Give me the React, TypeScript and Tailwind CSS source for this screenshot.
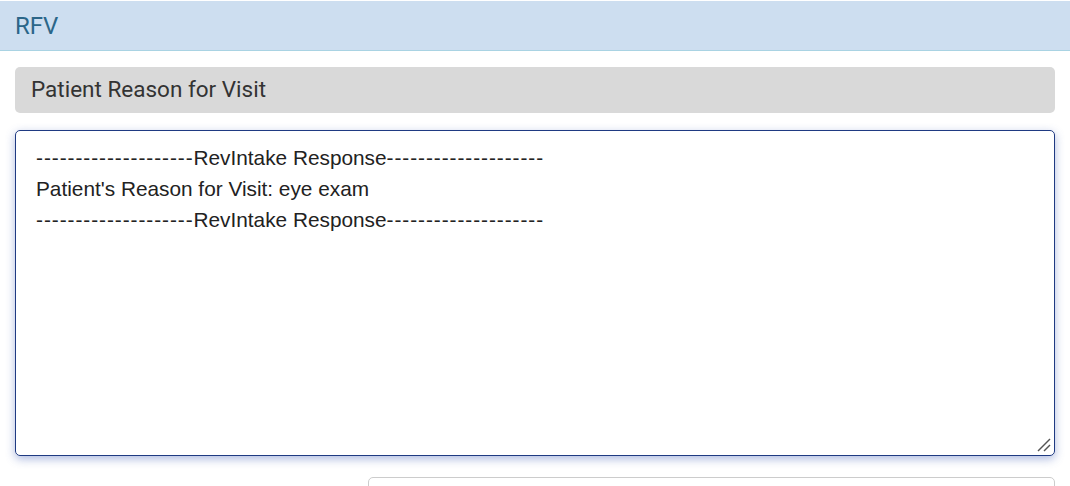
const dashes = '--------------------';

function Dashes() {
  return <span className="tracking-[0.95px]">{dashes}</span>;
}

export default function App() {
  return (
    <div className="w-[1070px] h-[486px] overflow-hidden bg-white">
      <div className="mt-px h-[50px] bg-[#cddef0] border-b border-[#a9d3e3] flex items-center px-[15px]">
        <span className="text-[24px] text-[#2b6689] font-['Roboto',sans-serif]">RFV</span>
      </div>

      <div className="px-[15px]">
        <div className="mt-4 h-[46px] rounded-[5px] bg-[#d9d9d9] flex items-center px-4">
          <span className="text-[22.5px] text-[#333] font-['Roboto',sans-serif]">Patient Reason for Visit</span>
        </div>

        <div className="relative mt-[17px] h-[326px] rounded-[5px] border border-[#1f3a82] px-5 pt-[11px] text-[20.8px] leading-[31px] text-[#222] font-['Liberation_Sans',Arial,sans-serif] shadow-[0_3px_10px_rgba(60,90,180,0.42)]">
          <div><Dashes />RevIntake Response<Dashes /></div>
          <div>Patient's Reason for Visit: eye exam</div>
          <div><Dashes />RevIntake Response<Dashes /></div>
          <svg className="absolute right-[3px] bottom-[3px]" width="14" height="14" viewBox="0 0 14 14">
            <line x1="1" y1="13" x2="13" y2="1" stroke="#555" strokeWidth="1.4" />
            <line x1="7" y1="13" x2="13" y2="7" stroke="#555" strokeWidth="1.4" />
          </svg>
        </div>

        <div className="flex mt-[21px]">
          <div className="w-[353px]" />
          <div className="flex-1 h-[40px] rounded-[5px] border border-[#cccccc]" />
        </div>
      </div>
    </div>
  );
}
